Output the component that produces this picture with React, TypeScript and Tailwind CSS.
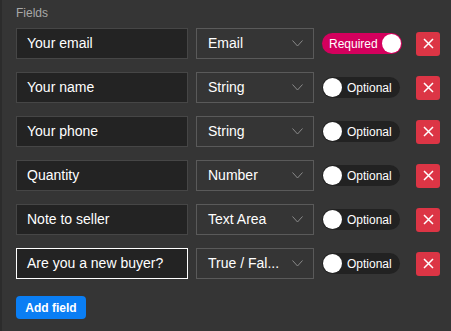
import React from "react";

type Field = { name: string; type: string; required: boolean; focused?: boolean };

const fields: Field[] = [
  { name: "Your email", type: "Email", required: true },
  { name: "Your name", type: "String", required: false },
  { name: "Your phone", type: "String", required: false },
  { name: "Quantity", type: "Number", required: false },
  { name: "Note to seller", type: "Text Area", required: false },
  { name: "Are you a new buyer?", type: "True / Fal...", required: false, focused: true },
];

function Chevron() {
  return (
    <svg width="11" height="7" viewBox="0 0 11 7" fill="none">
      <path d="M0.5 0.5 L5.5 6 L10.5 0.5" stroke="#8a8a8a" strokeWidth="1" />
    </svg>
  );
}

function Toggle({ on }: { on: boolean }) {
  if (on) {
    return (
      <div className="flex h-[21px] w-[80px] items-center justify-between rounded-full bg-[#d4005d] pl-[7px] pr-[1px]">
        <span className="text-[12px] leading-none text-white">Required</span>
        <span className="h-[19px] w-[19px] rounded-full bg-white" />
      </div>
    );
  }
  return (
    <div className="flex h-[21px] w-[78px] items-center gap-[5px] rounded-full bg-[#222222] pl-[1px]">
      <span className="h-[19px] w-[19px] rounded-full bg-white" />
      <span className="text-[12px] leading-none text-white">Optional</span>
    </div>
  );
}

export default function App() {
  return (
    <div
      className="min-h-[331px] w-[451px] border-l-2 border-[#2c2c2c] bg-[#353535] pl-[14px] pt-[5px]"
      style={{ fontFamily: '"Liberation Sans", Arial, sans-serif' }}
    >
      <div className="h-[16px] text-[12px] leading-[16px] text-[#a9a9a9]">Fields</div>
      <div className="mt-[7px] flex flex-col gap-[13px]">
        {fields.map((f) => (
          <div key={f.name} className="flex items-center">
            <div
              className={`flex h-[31px] w-[172px] items-center border bg-[#232323] pl-[10px] text-[14px] text-white ${
                f.focused ? "border-white" : "border-[#464646]"
              }`}
            >
              {f.name}
            </div>
            <div className="ml-[8px] flex h-[31px] w-[118px] items-center justify-between border border-[#5a5a5a] pl-[11px] pr-[10px] text-[14px] text-white">
              <span>{f.type}</span>
              <Chevron />
            </div>
            <div className="ml-[8px] w-[94px]">
              <Toggle on={f.required} />
            </div>
            <button className="flex h-[24px] w-[24px] items-center justify-center rounded-[3px] bg-[#dc3545]">
              <svg width="11" height="11" viewBox="0 0 11 11">
                <path d="M1 1 L10 10 M10 1 L1 10" stroke="white" strokeWidth="1.5" />
              </svg>
            </button>
          </div>
        ))}
      </div>
      <button className="mt-[17px] h-[23px] w-[70px] rounded-[4px] bg-[#0a7ef4] text-[12px] font-bold text-white">
        Add field
      </button>
    </div>
  );
}
